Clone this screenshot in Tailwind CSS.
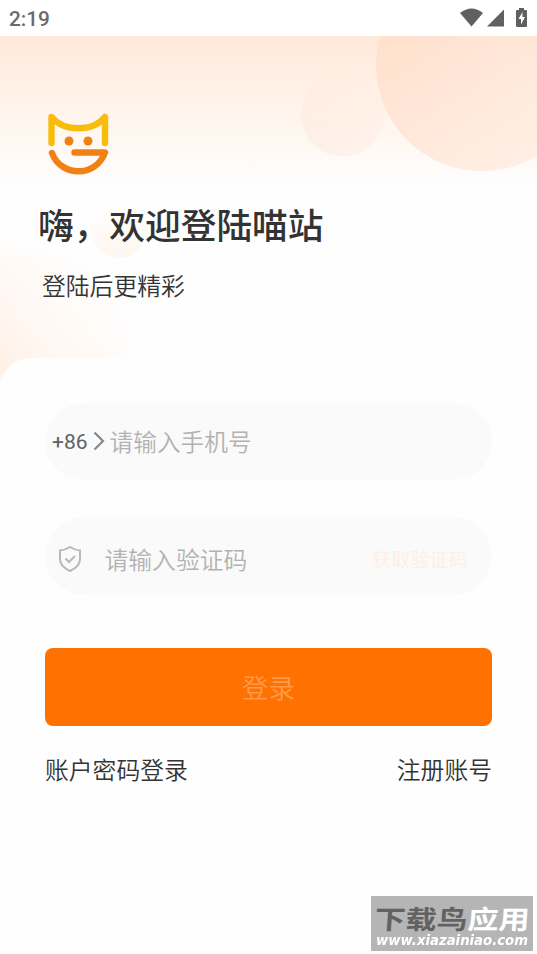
<!DOCTYPE html>
<html lang="zh-CN">
<head>
<meta charset="UTF-8">
<meta name="viewport" content="width=device-width, initial-scale=1">
<title>登录</title>
<script src="https://cdn.jsdelivr.net/npm/@tailwindcss/browser@4"></script>
</head>
<body class="bg-white">
<div class="relative flex h-[954px] w-[537px] flex-col overflow-hidden bg-[#fefefe] font-['Noto_Sans_CJK_SC',sans-serif] text-[#333]">
  <header class="flex h-9 shrink-0 items-center justify-between bg-white pl-[9px]">
    <span class="pt-px font-[Roboto,sans-serif] text-[20.800px] font-medium leading-6 text-[#6a6a6a]">2:19</span>
    <svg class="h-9 w-[79px]" viewBox="458 0 79 36" fill="#606060">
      <path d="M460 13Q471.500 4 483 13L471.500 26.500Z"/>
      <path d="M487 26.500H504V9.500Z"/>
      <path fill-rule="evenodd" d="M519 8h5v2h2q1 0 1 1v15q0 1-1 1h-9q-1 0-1-1v-15q0-1 1-1h2zM522.500 12l-4 7h2.500v5.500l4-7.500h-2.500z"/>
    </svg>
  </header>

  <section class="relative flex h-[364px] shrink-0 flex-col">
    <svg class="absolute inset-0 h-[364px] w-[537px]" viewBox="0 36 537 364">
      <defs>
        <linearGradient id="sky" x1="0" y1="0" x2="0" y2="1"><stop offset="0" stop-color="#ffe9da"/><stop offset=".5" stop-color="#fff4ec"/><stop offset="1" stop-color="#fefefe"/></linearGradient>
        <linearGradient id="sun" x1=".1" y1=".2" x2=".6" y2="1"><stop offset="0" stop-color="#ffdfca"/><stop offset="1" stop-color="#ffeee4"/></linearGradient>
        <linearGradient id="small" x1="0" y1="0" x2="1" y2="1"><stop offset="0" stop-color="#ffecdf"/><stop offset="1" stop-color="#fff2ea"/></linearGradient>
        <linearGradient id="dot" x1="0" y1="0" x2="0" y2="1"><stop offset="0" stop-color="#fefefe"/><stop offset="1" stop-color="#fff6ef"/></linearGradient>
        <linearGradient id="low" x1="0" y1="1" x2=".9" y2=".3"><stop offset="0" stop-color="#ffede1"/><stop offset=".5" stop-color="#fff8f3"/><stop offset="1" stop-color="#fefdfc"/></linearGradient>
        <filter id="soft" x="-20%" y="-20%" width="140%" height="140%"><feGaussianBlur stdDeviation="6"/></filter>
      </defs>
      <rect y="36" width="537" height="152" fill="url(#sky)"/>
      <circle cx="342.500" cy="114.500" r="42" fill="url(#small)" opacity=".85"/>
      <circle cx="482" cy="65" r="106" fill="url(#sun)"/>
      <circle cx="119" cy="231" r="27" fill="url(#dot)"/>
      <path d="M-20 252Q30 248 62 260Q122 278 122 330V380H-20Z" fill="url(#low)" filter="url(#soft)"/>
      <path d="M0 400V387Q4 358 34 358H537V400Z" fill="#fefefe"/>
    </svg>
    <div class="relative flex flex-col">
      <svg class="ml-[46px] mt-[75px] h-[66px] w-[66px]" viewBox="46 111 66 66" fill="none" stroke-width="6.400" stroke-linecap="round" stroke-linejoin="round">
        <path stroke="#f8bd0c" d="M51.500 143V117C64 132 93 132 105 117V143"/>
        <path stroke="#ef8212" d="M52 153C61 177.500 96 177.500 105 152.500H74.500"/>
        <g fill="#ef8212"><circle cx="69" cy="141" r="4.500"/><circle cx="88" cy="141" r="4.500"/></g>
      </svg>
      <h1 class="ml-[38px] mt-[22px] text-[35.700px] font-medium leading-[50px]">嗨，欢迎登陆喵站</h1>
      <p class="ml-[42px] mt-[19px] text-[23.800px] font-[350] leading-[34px]">登陆后更精彩</p>
    </div>
  </section>

  <main class="flex flex-col px-[45px] pt-[3px]">
    <div class="flex h-[77px] items-center rounded-full bg-[#fafafa] pl-[7px]">
      <span class="font-[Roboto,sans-serif] text-[21px] leading-6 text-[#606060]">+86</span>
      <svg class="mb-px ml-[5px] h-5 w-3" viewBox="0 0 12 20" fill="none" stroke="#888" stroke-width="2.200"><path d="M1.500 1.500L10 10L1.500 18.500"/></svg>
      <span class="mb-[2px] ml-[5px] text-[23.700px] font-[350] leading-[34px] text-[#b2b2b2]">请输入手机号</span>
    </div>
    <div class="mt-[37px] flex h-[78px] items-center rounded-full bg-[#fafafa] pl-[13px] pr-6 pt-[5px]">
      <svg class="h-7 w-6" viewBox="0 0 24 28" fill="none" stroke="#b8b8b8" stroke-width="2"><path d="M12 2Q17 5 22 5.500V14Q22 21.500 12 26Q2 21.500 2 14V5.500Q7 5 12 2Z"/><path d="M7.500 13.500L11 17L17 11"/></svg>
      <span class="ml-[22.500px] text-[23.800px] font-[350] leading-[34px] text-[#b2b2b2]">请输入验证码</span>
      <span class="ml-auto text-[19.200px] leading-7 text-[#ffeee4]">获取验证码</span>
    </div>
    <button class="mt-[53px] h-[78px] rounded-lg bg-[#ff7100] text-[26.500px] font-[350] text-[#ff9b4d]">登录</button>
    <div class="mt-[26px] flex justify-between text-[23.800px] font-[350] leading-[34px]">
      <a>账户密码登录</a>
      <a>注册账号</a>
    </div>
  </main>

  <aside class="absolute left-[371px] top-[896px] flex h-[55px] w-[162px] flex-col bg-[#b5b5b5]">
    <svg class="h-[37px] w-[162px] overflow-visible" viewBox="0 0 162 37">
      <g transform="translate(3 33) skewX(-4) scale(1.120 .94)"><text font-family="Noto Sans CJK SC" font-weight="700" font-size="27.700" fill="#626262">下载鸟<tspan fill="#fff">应用</tspan></text></g>
    </svg>
    <span class="origin-left scale-y-[1.1] whitespace-nowrap pl-[5px] font-['DejaVu_Sans',sans-serif] text-[13.250px] font-bold italic leading-4 text-white">www.xiazainiao.com</span>
  </aside>
</div>
</body>
</html>
